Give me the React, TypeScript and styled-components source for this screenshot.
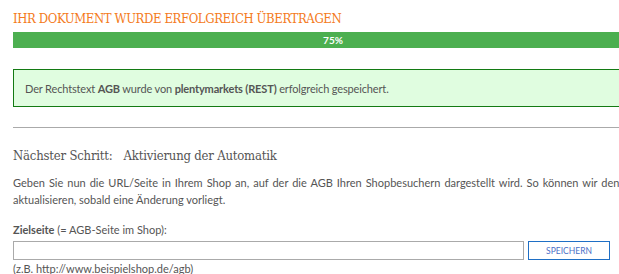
import React from "react"
import styled, { createGlobalStyle } from "styled-components"

const GlobalStyle = createGlobalStyle`
  html, body {
    margin: 0;
    padding: 0;
    background: #fff;
    overflow: hidden;
  }
  body {
    font-family: Lato, "Liberation Sans", sans-serif;
    color: #555;
  }
`

const Page = styled.main`
  width: 640px;
  padding: 11px 0 0 13px;
`

const Title = styled.h1`
  margin: 0;
  font-family: "DejaVu Serif Condensed", "DejaVu Serif", serif;
  font-stretch: condensed;
  font-weight: normal;
  font-size: 13px;
  line-height: 16px;
  letter-spacing: -0.4px;
  color: #f47a20;
`

const Progress = styled.div`
  margin-top: 5px;
  height: 16px;
  background: #4caf50;
  display: flex;
  align-items: center;
  justify-content: center;
`

const ProgressLabel = styled.span`
  color: #fff;
  font-size: 10px;
  font-weight: bold;
`

const Alert = styled.div`
  margin-top: 21px;
  height: 38px;
  box-sizing: border-box;
  border: 1px solid #137a13;
  background: #e0fde0;
  display: flex;
  align-items: center;
  padding-left: 11px;
  font-size: 11px;
  letter-spacing: -0.15px;
`

const Rule = styled.hr`
  margin: 20px 0 0;
  border: 0;
  border-top: 1px solid #aaa;
`

const StepHeading = styled.h2`
  margin: 20px 0 0;
  font-family: "DejaVu Serif Condensed", "DejaVu Serif", serif;
  font-stretch: condensed;
  font-weight: normal;
  font-size: 13px;
  line-height: 16px;
  letter-spacing: -0.2px;
  color: #555;
  display: flex;
  gap: 11px;
`

const Text = styled.p`
  margin: 10px 0 0;
  font-size: 11px;
  line-height: 17px;
`

const Line = styled.span<{ $spread?: number }>`
  display: block;
  white-space: nowrap;
  word-spacing: ${p => p.$spread ?? 0}px;
`

const Label = styled.label`
  display: block;
  margin-top: 14px;
  font-size: 11px;
  line-height: 16px;
  color: #555;
`

const FieldRow = styled.div`
  margin-top: 3px;
  display: flex;
  gap: 4px;
`

const Input = styled.input`
  width: 511px;
  height: 19px;
  box-sizing: border-box;
  border: 1px solid #aaa;
  margin: 0;
  padding: 0 4px;
`

const SaveButton = styled.button`
  width: 82px;
  height: 19px;
  box-sizing: border-box;
  border: 1px solid #1f6fc5;
  background: #fff;
  color: #4a70c8;
  font-family: Lato, "Liberation Sans", sans-serif;
  font-size: 8.5px;
  text-transform: uppercase;
  padding: 0;
`

const Hint = styled.div`
  margin-top: 1px;
  font-size: 11px;
  line-height: 16px;
`

export default function App() {
  return (
    <>
      <GlobalStyle />
      <Page>
        <Title>IHR DOKUMENT WURDE ERFOLGREICH ÜBERTRAGEN</Title>
        <Progress>
          <ProgressLabel>75%</ProgressLabel>
        </Progress>
        <Alert>
          <span>
            Der Rechtstext <b>AGB</b> wurde von <b>plentymarkets (REST)</b> erfolgreich gespeichert.
          </span>
        </Alert>
        <Rule />
        <StepHeading>
          <span>Nächster Schritt:</span>
          <span>Aktivierung der Automatik</span>
        </StepHeading>
        <Text>
          <Line $spread={1.2}>
            Geben Sie nun die URL/Seite in Ihrem Shop an, auf der die AGB Ihren Shopbesuchern dargestellt wird. So können wir den Rechtstext automatisch
          </Line>
          <Line>aktualisieren, sobald eine Änderung vorliegt.</Line>
        </Text>
        <Label htmlFor="target">
          <b>Zielseite</b> (= AGB-Seite im Shop):
        </Label>
        <FieldRow>
          <Input id="target" type="text" />
          <SaveButton>Speichern</SaveButton>
        </FieldRow>
        <Hint>(z.B. http://www.beispielshop.de/agb)</Hint>
      </Page>
    </>
  )
}
